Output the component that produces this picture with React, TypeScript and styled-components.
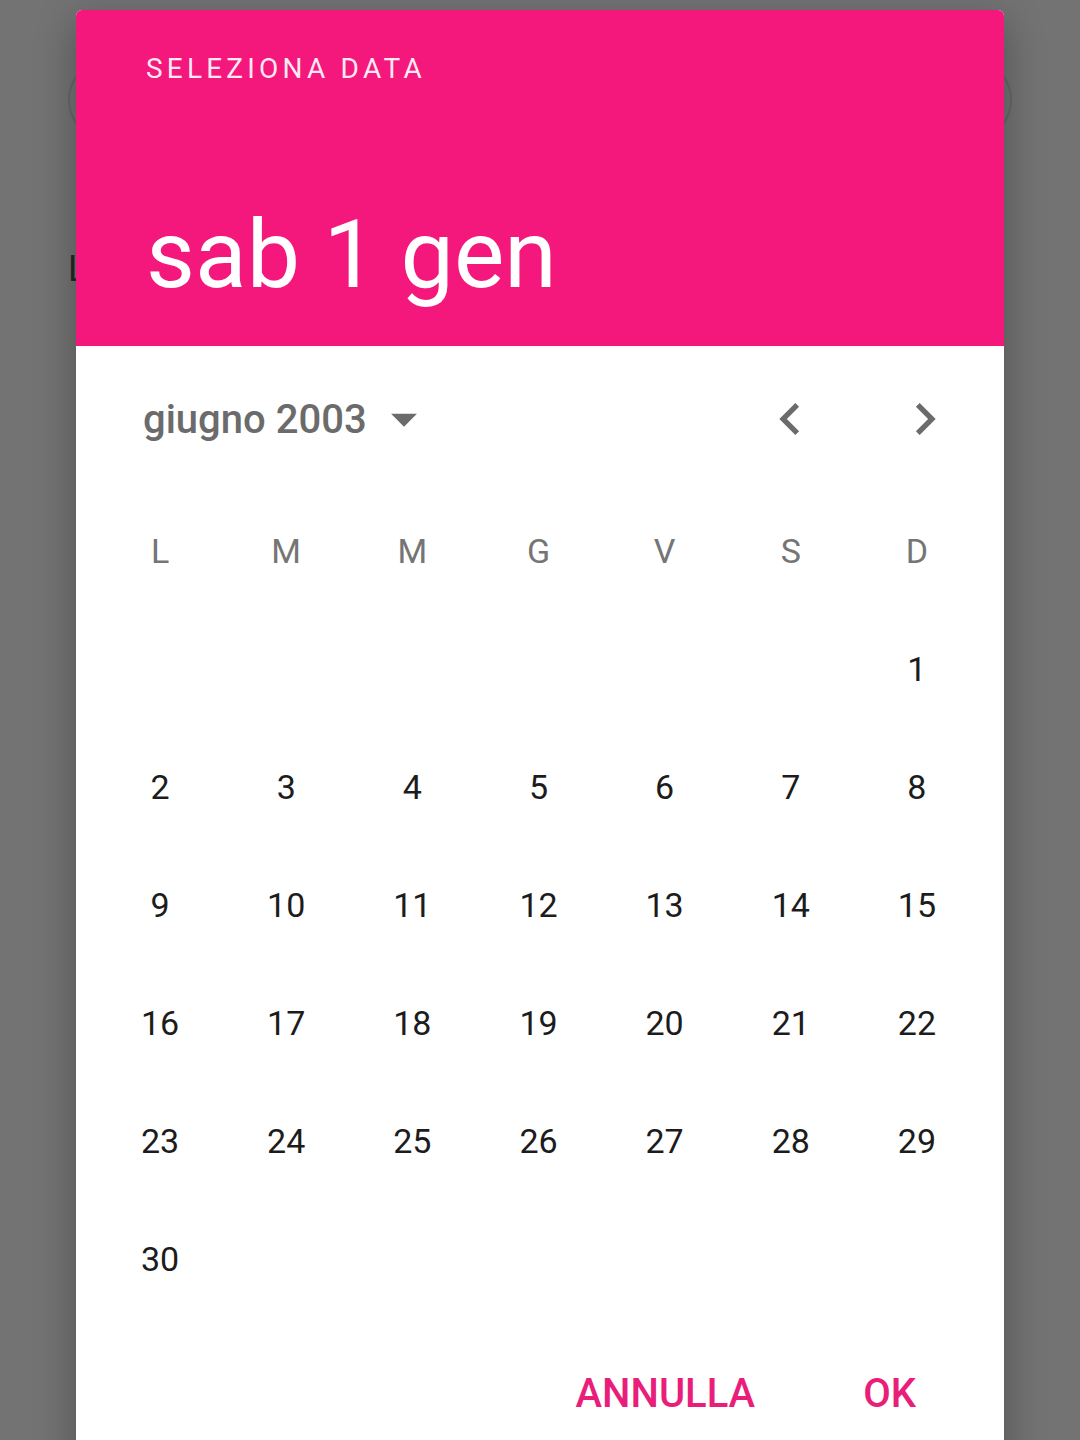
import styled, { createGlobalStyle } from "styled-components";

const GlobalStyle = createGlobalStyle`
  html, body {
    margin: 0;
    padding: 0;
    background: #ffffff;
    font-family: Roboto, "Liberation Sans", sans-serif;
  }
`;

/* page behind the dialog */
const Page = styled.div`
  position: relative;
  width: 1080px;
  height: 1440px;
  overflow: hidden;
  padding: 58px 68px 0;
  box-sizing: border-box;
  display: flex;
  flex-direction: column;
`;

const Pill = styled.div`
  height: 84px;
  border: 2px solid #e4e4e4;
  border-radius: 42px;
  box-sizing: border-box;
`;

const FieldLabel = styled.div`
  margin-top: 106px;
  font-size: 36px;
  color: #5a5a5a;
`;

const Scrim = styled.div`
  position: absolute;
  inset: 0;
  background: rgba(0, 0, 0, 0.55);
`;

/* dialog */
const Dialog = styled.div`
  position: absolute;
  left: 76px;
  top: 10px;
  width: 928px;
  height: 1460px;
  background: #ffffff;
  border-radius: 6px;
  overflow: hidden;
  display: flex;
  flex-direction: column;
  box-shadow: 0 12px 40px rgba(0, 0, 0, 0.3);
`;

const Header = styled.div`
  background: #f5187c;
  padding: 42px 70px 41px;
  display: flex;
  flex-direction: column;
`;

const Overline = styled.div`
  font-size: 28px;
  line-height: 34px;
  letter-spacing: 4.2px;
  color: rgba(255, 255, 255, 0.92);
`;

const Headline = styled.div`
  margin-top: 119px;
  font-size: 95px;
  line-height: 100px;
  color: #ffffff;
`;

const MonthRow = styled.div`
  height: 146px;
  display: flex;
  align-items: center;
  padding: 0 31px 0 67px;
`;

const MonthButton = styled.div`
  display: flex;
  align-items: center;
  font-size: 40px;
  font-weight: 500;
  color: #6b6b6b;
  flex: 1;
`;

const NavGroup = styled.div`
  display: flex;
  gap: 39px;
`;

const NavButton = styled.div`
  width: 96px;
  height: 96px;
  display: flex;
  align-items: center;
  justify-content: center;
`;

const Grid = styled.div`
  display: grid;
  grid-template-columns: repeat(7, 1fr);
  grid-auto-rows: 118px;
  padding: 0 24px 0 21px;
`;

const Cell = styled.div<{ $head?: boolean }>`
  display: flex;
  align-items: center;
  justify-content: center;
  font-size: 34px;
  color: ${(p) => (p.$head ? "#757575" : "#1c1c1c")};
`;

const Actions = styled.div`
  display: flex;
  justify-content: flex-end;
  gap: 60px;
  padding: 21px 64px 0 0;
`;

const TextButton = styled.div`
  height: 108px;
  padding: 0 24px;
  display: flex;
  align-items: center;
  font-size: 40px;
  font-weight: 500;
  color: #e91e7b;
`;

const Icon = ({ d, size }: { d: string; size: number }) => (
  <svg width={size} height={size} viewBox="0 0 24 24" fill="#6b6b6b">
    <path d={d} />
  </svg>
);

const weekDays = ["L", "M", "M", "G", "V", "S", "D"];

export default function App() {
  // giugno 2003 starts on Sunday
  const cells: (number | null)[] = [...Array(6).fill(null)];
  for (let d = 1; d <= 30; d++) cells.push(d);

  return (
    <>
      <GlobalStyle />
      <Page>
        <Pill />
        <FieldLabel>L</FieldLabel>
        <Scrim />
        <Dialog>
          <Header>
            <Overline>SELEZIONA DATA</Overline>
            <Headline>sab 1 gen</Headline>
          </Header>

          <MonthRow>
            <MonthButton>
              giugno 2003
              <span style={{ marginLeft: 6, display: "flex" }}>
                <Icon size={62} d="M7 10l5 5 5-5z" />
              </span>
            </MonthButton>
            <NavGroup>
              <NavButton>
                <Icon size={64} d="M15.41 7.41L14 6l-6 6 6 6 1.41-1.41L10.83 12z" />
              </NavButton>
              <NavButton>
                <Icon size={64} d="M10 6L8.59 7.41 13.17 12l-4.58 4.59L10 18l6-6z" />
              </NavButton>
            </NavGroup>
          </MonthRow>

          <Grid>
            {weekDays.map((w, i) => (
              <Cell key={"h" + i} $head>
                {w}
              </Cell>
            ))}
            {cells.map((d, i) => (
              <Cell key={i}>{d ?? ""}</Cell>
            ))}
          </Grid>

          <Actions>
            <TextButton>ANNULLA</TextButton>
            <TextButton>OK</TextButton>
          </Actions>
        </Dialog>
      </Page>
    </>
  );
}
